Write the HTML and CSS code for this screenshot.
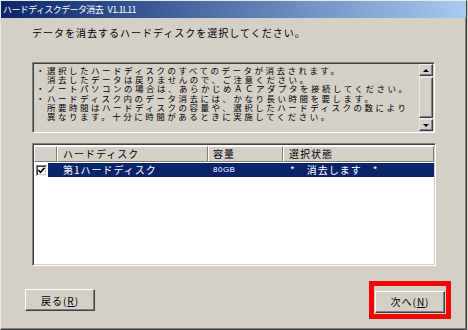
FILE: index.html
```html
<!DOCTYPE html>
<html lang="ja">
<head>
    <meta charset="UTF-8">
    <meta name="viewport" content="width=device-width, initial-scale=1.0">
    <title>ハードディスクデータ消去</title>
    <link rel="stylesheet" href="styles.css">
</head>
<body>
    <div class="window">
        <div class="titlebar">ハードディスクデータ消去 V1.1L11</div>
        <div class="content">
            <p class="lead">データを消去するハードディスクを選択してください。</p>

            <div class="notice">
                <div class="notice-text">
                    <p>・選択したハードディスクのすべてのデータが消去されます。<br>消去したデータは戻りませんので、ご注意ください。</p>
                    <p>・ノートパソコンの場合は、あらかじめＡＣアダプタを接続してください。</p>
                    <p>・ハードディスク内のデータ消去には、かなり長い時間を要します。<br>所要時間はハードディスクの容量や、選択したハードディスクの数により<br>異なります。十分に時間があるときに実施してください。</p>
                </div>
                <div class="scrollbar">
                    <div class="sb-btn"><span class="arrow up"></span></div>
                    <div class="sb-thumb"></div>
                    <div class="sb-btn"><span class="arrow down"></span></div>
                </div>
            </div>

            <div class="list">
                <div class="list-head">
                    <div class="col col-check"></div>
                    <div class="col col-name">ハードディスク</div>
                    <div class="col col-size">容量</div>
                    <div class="col col-state">選択状態</div>
                </div>
                <div class="list-row">
                    <span class="check">
                        <svg width="7" height="7" viewBox="0 0 7 7"><polyline points="0.5,3 2.5,5.2 6.5,0.8" fill="none" stroke="#000" stroke-width="1.6"/></svg>
                    </span>
                    <div class="row-sel">
                        <span class="cell-name">第1ハードディスク</span>
                        <span class="cell-size">80GB</span>
                        <span class="cell-state">*　消去します　*</span>
                    </div>
                </div>
            </div>

            <div class="actions">
                <button class="btn">戻る(<u>R</u>)</button>
                <div class="highlight">
                    <button class="btn">次へ(<u>N</u>)</button>
                </div>
            </div>
        </div>
    </div>
</body>
</html>
```

FILE: styles.css
```css
* {
    margin: 0;
    padding: 0;
    box-sizing: border-box;
}
body {
    background: #d4d0c8;
    font-family: "Noto Sans CJK JP", "Noto Sans", sans-serif;
    color: #000;
}
.window {
    width: 467px;
    height: 330px;
    display: flex;
    flex-direction: column;
    background: #d4d0c8;
    border: 1px solid;
    border-color: #ebe9e4 #404040 #404040 #ebe9e4;
    box-shadow: inset -1px -1px #808080;
}
.titlebar {
    height: 17px;
    padding-left: 2px;
    background: linear-gradient(90deg, #0a246a, #a6caf0);
    color: #fff;
    font-size: 9px;
    line-height: 17px;
    letter-spacing: -0.6px;
    word-spacing: 3px;
    white-space: nowrap;
}
.content {
    flex: 1;
    display: flex;
    flex-direction: column;
}
.lead {
    margin: 9px 0 0 31px;
    font-size: 10px;
    line-height: 12px;
    letter-spacing: 1px;
}

/* read-only notice box */
.notice {
    margin: 23px 0 0 31px;
    width: 403px;
    height: 71px;
    display: flex;
    border: 1px solid;
    border-color: #808080 #fff #fff #808080;
    box-shadow: inset 1px 1px #404040, inset -1px -1px #d4d0c8;
    padding: 1px;
}
.notice-text {
    flex: 1;
    padding: 2px 0 0 2px;
    font-size: 8.5px;
    line-height: 9.2px;
    letter-spacing: 2.5px;
    white-space: nowrap;
    overflow: hidden;
}
.notice-text p {
    padding-left: 11px;
    text-indent: -11px;
}
.scrollbar {
    width: 14px;
    display: flex;
    flex-direction: column;
    background: #e6e4df;
}
.sb-btn, .sb-thumb {
    background: #d4d0c8;
    border: 1px solid;
    border-color: #ebe9e4 #404040 #404040 #ebe9e4;
    box-shadow: inset -1px -1px #808080;
}
.sb-btn {
    height: 12px;
    display: flex;
    align-items: center;
    justify-content: center;
}
.sb-thumb {
    flex: 1;
    margin: 1px 0;
}
.arrow {
    width: 0;
    height: 0;
    border-left: 3px solid transparent;
    border-right: 3px solid transparent;
}
.arrow.up {
    border-bottom: 3px solid #000;
}
.arrow.down {
    border-top: 3px solid #000;
}

/* disk list */
.list {
    margin: 10px 0 0 31px;
    width: 404px;
    height: 123px;
    background: #fff;
    border: 1px solid;
    border-color: #808080 #fff #fff #808080;
    box-shadow: inset 1px 1px #404040, inset -1px -1px #d4d0c8;
    padding: 1px;
    font-size: 10px;
    letter-spacing: 1px;
}
.list-head {
    display: flex;
    height: 16px;
    margin-top: 1px;
}
.col {
    background: #d4d0c8;
    border: 1px solid;
    border-color: #fff #808080 #808080 #fff;
    line-height: 14px;
    white-space: nowrap;
}
.col-check { width: 23px; }
.col-name { width: 151px; padding-left: 5px; }
.col-size { width: 75px; padding-left: 4px; }
.col-state { flex: 1; padding-left: 5px; }

.list-row {
    display: flex;
    align-items: center;
    height: 14px;
    margin-top: 1px;
}
.check {
    width: 11px;
    height: 11px;
    margin: 0 1px 0 2px;
    display: flex;
    align-items: center;
    justify-content: center;
    background: #fff;
    border: 1px solid;
    border-color: #808080 #fff #fff #808080;
    box-shadow: inset 1px 1px #404040, inset -1px -1px #d4d0c8;
}
.row-sel {
    flex: 1;
    display: flex;
    height: 14px;
    line-height: 14px;
    background: #0a246a;
    color: #fff;
    white-space: nowrap;
}
.cell-name { width: 160px; padding-left: 15px; }
.cell-size {
    width: 75px;
    padding-left: 5px;
    font-family: "Liberation Sans", sans-serif;
    font-size: 8px;
    letter-spacing: 0.5px;
}
.cell-state { padding-left: 7px; }

/* bottom buttons */
.actions {
    margin-top: 17px;
    height: 34px;
    display: flex;
    align-items: center;
    justify-content: space-between;
    padding: 0 15px 0 24px;
}
.btn {
    width: 70px;
    height: 22px;
    background: #d4d0c8;
    border: 1px solid;
    border-color: #fff #404040 #404040 #fff;
    box-shadow: inset -1px -1px #808080;
    font-family: "Noto Sans CJK JP", "Noto Sans", sans-serif;
    font-size: 10px;
    letter-spacing: 1px;
    color: #000;
}
.btn u {
    text-underline-offset: 1px;
}
.highlight {
    border: 5px solid #ff0000;
    padding: 1px;
}
```
